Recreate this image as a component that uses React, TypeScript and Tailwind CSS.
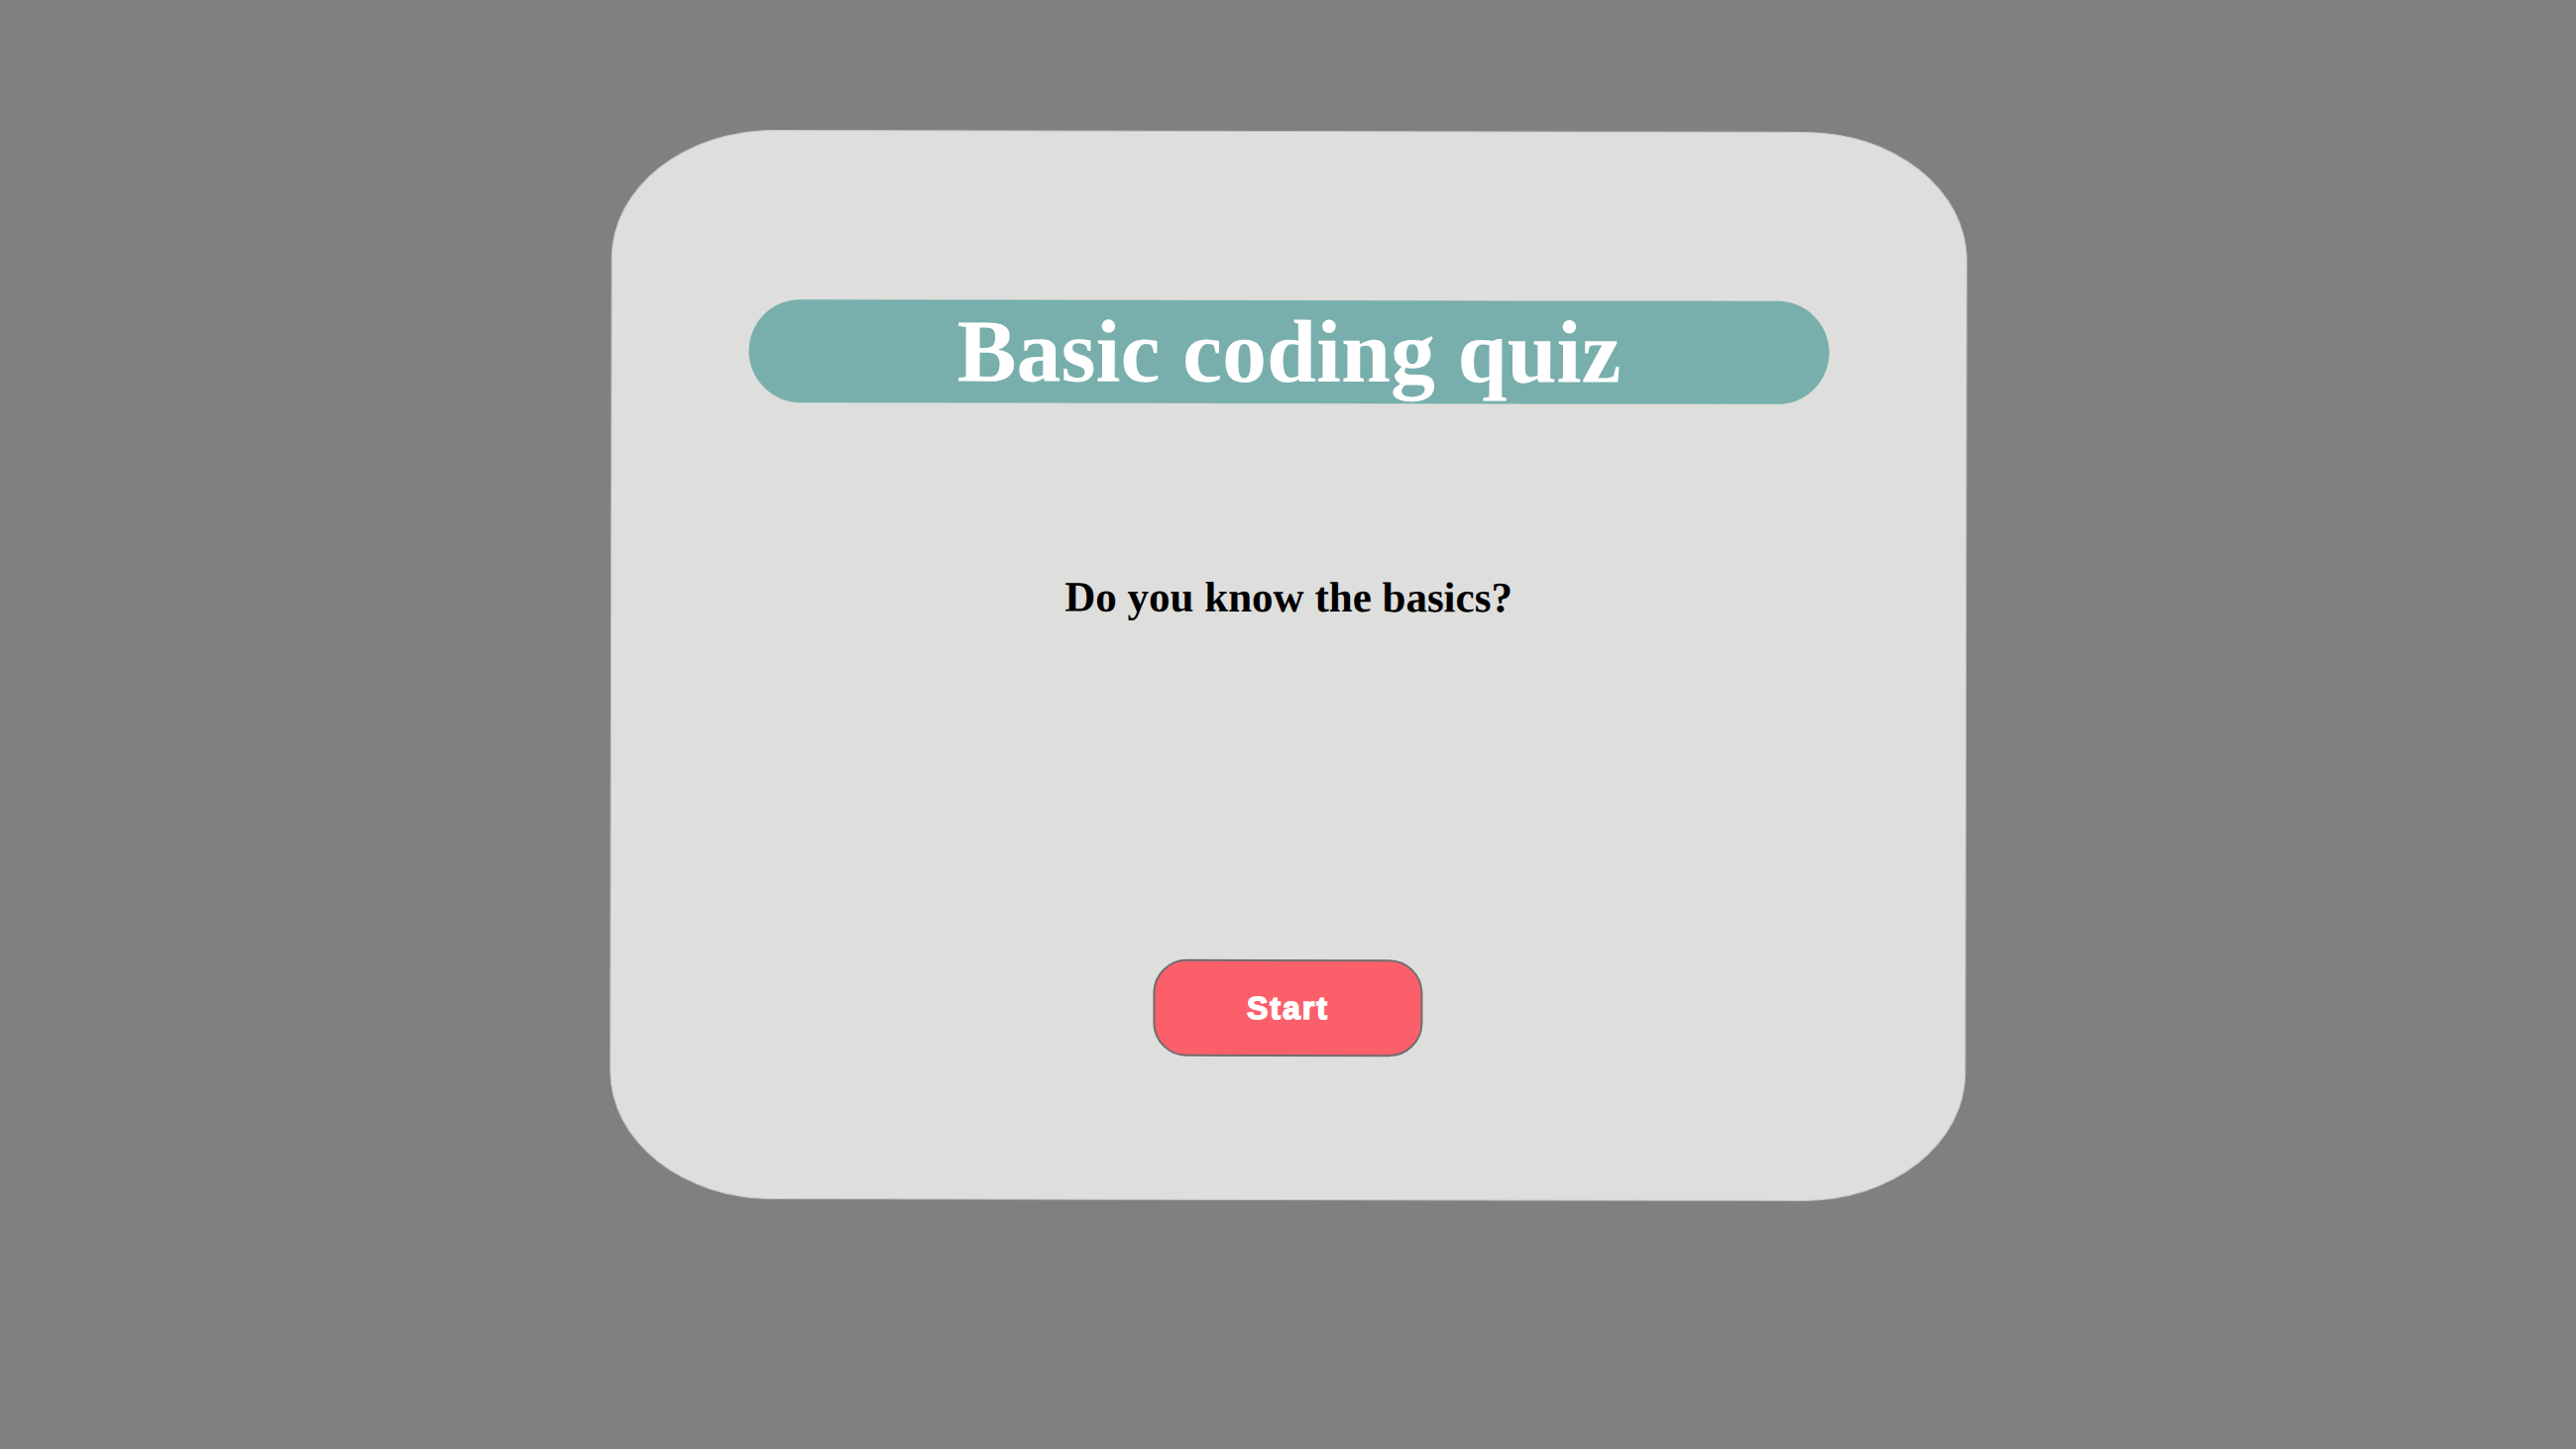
import React from "react";

export default function App() {
  return (
    <div className="min-h-screen w-full bg-[#808080] flex justify-center pt-[132px]">
      <div className="w-[1368px] h-[1079px] bg-[#dededc] border border-[#c9c5c5] rounded-[12%] rotate-[0.1deg] flex flex-col items-center pt-[170px]">
        <div className="w-[1090px] h-[104px] rounded-full bg-[#78afac] flex items-center justify-center">
          <h1
            className="text-[90px] leading-[104px] font-bold text-white"
            style={{ fontFamily: '"Liberation Serif", "Times New Roman", serif' }}
          >
            Basic coding quiz
          </h1>
        </div>
        <p
          className="mt-[174px] text-[43px] leading-[43px] font-bold text-black"
          style={{ fontFamily: '"Liberation Serif", "Times New Roman", serif' }}
        >
          Do you know the basics?
        </p>
        <button
          className="mt-[344px] w-[272px] h-[98px] rounded-[34px] bg-[#fb5f6a] border-2 border-[#6e6e6e] flex items-center justify-center text-white text-[32px] font-bold tracking-[2px] [-webkit-text-stroke:1.5px_white]"
          style={{ fontFamily: '"Liberation Sans", Arial, sans-serif' }}
        >
          Start
        </button>
      </div>
    </div>
  );
}
